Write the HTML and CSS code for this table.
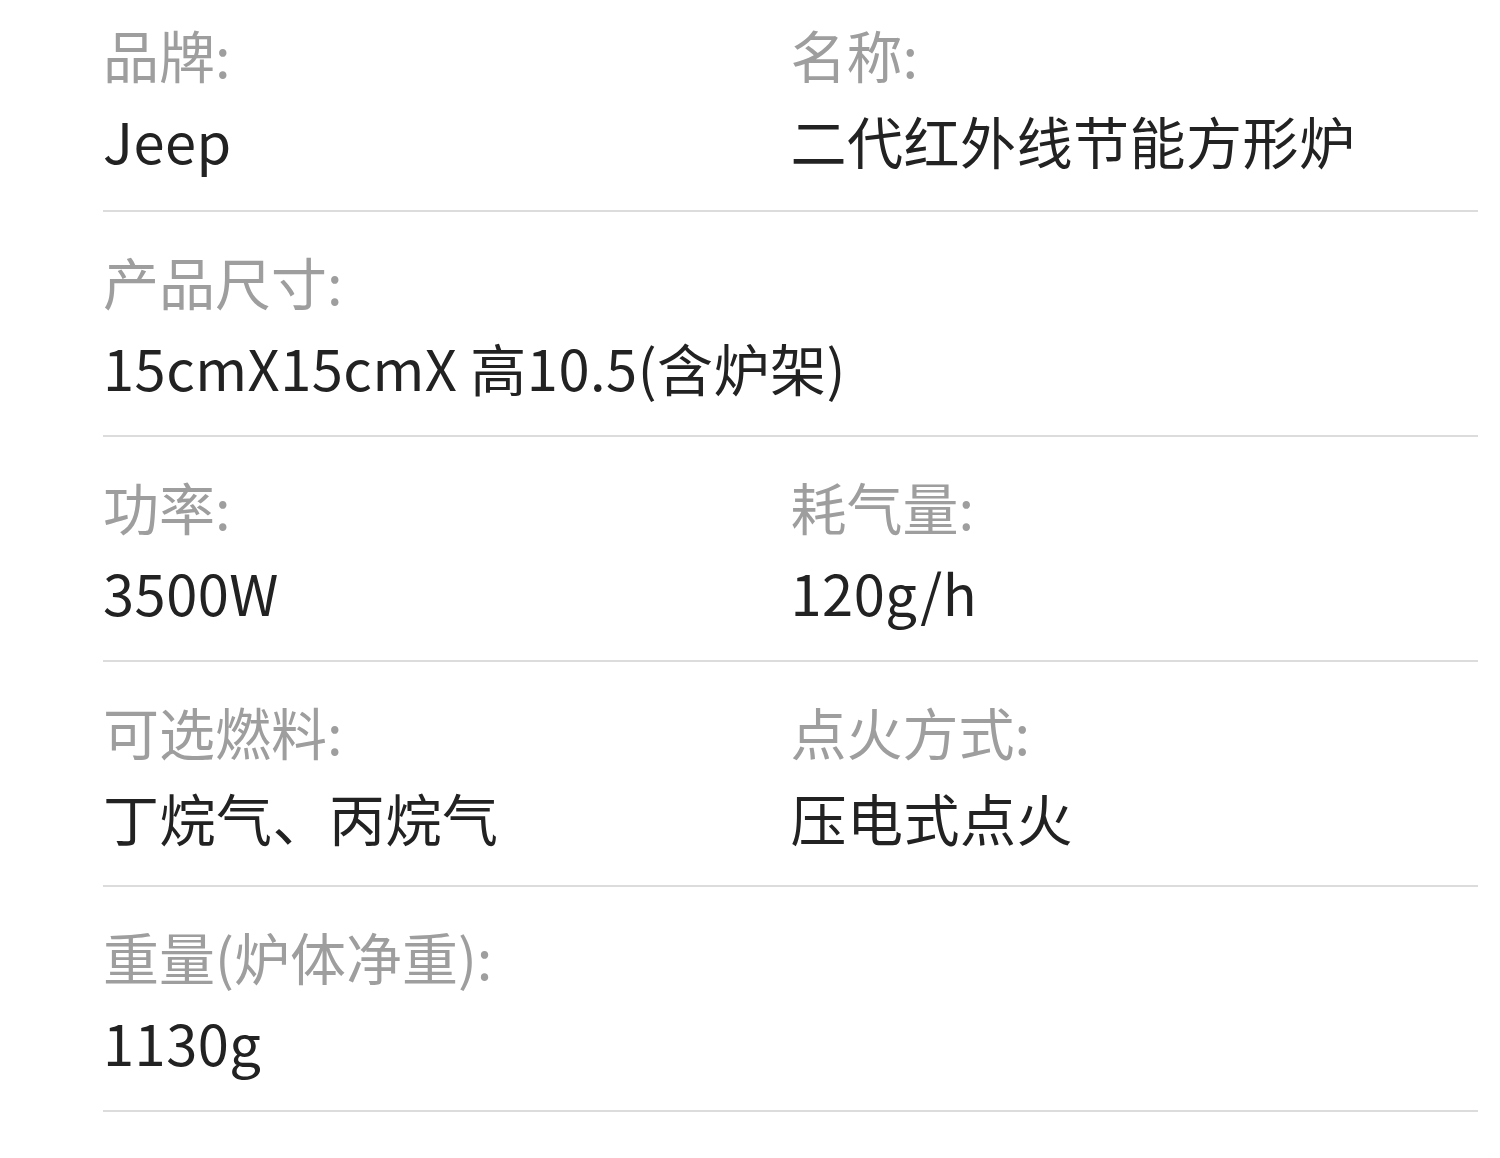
FILE: index.html
```html
<!DOCTYPE html>
<html lang="zh-CN">
<head>
<meta charset="UTF-8">
<title>产品参数</title>
<link rel="stylesheet" href="styles.css">
</head>
<body>
	<div class="specs">
		<div class="row">
			<div class="cell">
				<div class="label">品牌:</div>
				<div class="value">Jeep</div>
			</div>
			<div class="cell">
				<div class="label">名称:</div>
				<div class="value">二代红外线节能方形炉</div>
			</div>
		</div>
		<div class="row">
			<div class="cell wide">
				<div class="label">产品尺寸:</div>
				<div class="value">15cmX15cmX 高10.5(含炉架)</div>
			</div>
		</div>
		<div class="row">
			<div class="cell">
				<div class="label">功率:</div>
				<div class="value">3500W</div>
			</div>
			<div class="cell">
				<div class="label">耗气量:</div>
				<div class="value">120g/h</div>
			</div>
		</div>
		<div class="row">
			<div class="cell">
				<div class="label">可选燃料:</div>
				<div class="value">丁烷气、丙烷气</div>
			</div>
			<div class="cell">
				<div class="label">点火方式:</div>
				<div class="value">压电式点火</div>
			</div>
		</div>
		<div class="row">
			<div class="cell wide">
				<div class="label">重量(炉体净重):</div>
				<div class="value">1130g</div>
			</div>
		</div>
	</div>
</body>
</html>
```

FILE: styles.css
```css
* { padding: 0; margin: 0; box-sizing: border-box; }
html, body { height: 100%; overflow: hidden; background: #fff; }
body { font-family: "Noto Sans CJK SC", "Noto Sans", sans-serif; }
.specs { padding: 0 22px 0 103px; }
.row { display: grid; grid-template-columns: 1fr 1fr; padding: 26px 0 25px 0; border-bottom: 2px solid #dcdcdc; }
.row:first-child { padding: 11px 0 27px 0; }
.cell.wide { grid-column: 1 / 3; }
.label { font-size: 56px; line-height: 86px; color: #9e9e9e; }
.value { font-size: 56px; line-height: 86px; color: #222; letter-spacing: 0.5px; }
```
